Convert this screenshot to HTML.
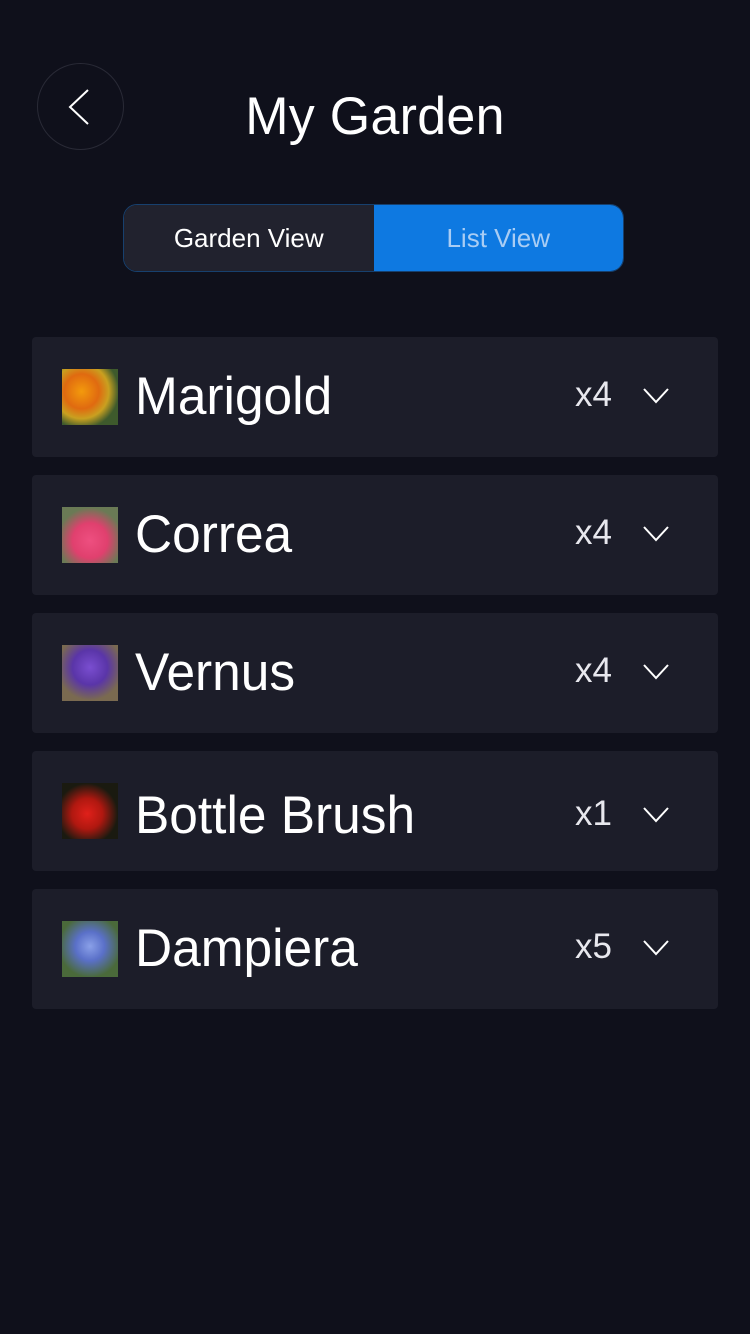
<!DOCTYPE html>
<html><head><style>
*{margin:0;padding:0;box-sizing:border-box}
body{width:750px;height:1334px;background:#0f101b;font-family:"Liberation Sans",sans-serif;color:#fff;position:relative;overflow:hidden}
.back{position:absolute;left:37px;top:63px;width:87px;height:87px;border-radius:50%;border:1.5px solid #292a36}
.title{position:absolute;left:0;width:750px;top:86px;text-align:center;font-size:53px;letter-spacing:0.3px;transform:scaleX(0.98)}
.tog{position:absolute;left:123px;top:204px;width:501px;height:68px;border-radius:14px;border:1px solid #17406e;overflow:hidden;display:flex}
.tog div{flex:1;display:flex;align-items:center;justify-content:center;font-size:26px}
.l{background:#21222e;color:#fff}
.r{background:#0e79e1;color:#a9cdf4}
.card{position:absolute;left:32px;width:686px;height:120px;background:#1c1d29;border-radius:4px}
.img{position:absolute;left:30px;top:32px;width:56px;height:56px}
.name{position:absolute;left:103px;top:28px;font-size:53px;line-height:64px;transform-origin:left;transform:scaleX(0.97)}
.cnt{position:absolute;left:543px;top:38px;font-size:35px;color:#e8e8ee}
.chev{position:absolute;left:610px;top:49px}
</style></head><body>
<div class="back"><svg width="87" height="87" style="position:absolute;left:-1px;top:-1px"><path d="M51 27 L33 44 L51 61" fill="none" stroke="#fff" stroke-width="2"/></svg></div>
<div class="title">My Garden</div>
<div class="tog"><div class="l">Garden View</div><div class="r">List View</div></div>

<div class="card" style="top:337px"><div class="img" style="background:radial-gradient(circle at 35% 40%,#f39a0c 0,#e06a10 35%,#c9a020 55%,#3e5a2c 75%)"></div><div class="name">Marigold</div><div class="cnt">x4</div><svg class="chev" width="30" height="20"><path d="M2 3 L14 16 L26 3" fill="none" stroke="#fff" stroke-width="2"/></svg></div>
<div class="card" style="top:475px"><div class="img" style="background:radial-gradient(circle at 50% 60%,#ee4f80 0,#e0406e 40%,#6a7a55 75%)"></div><div class="name">Correa</div><div class="cnt">x4</div><svg class="chev" width="30" height="20"><path d="M2 3 L14 16 L26 3" fill="none" stroke="#fff" stroke-width="2"/></svg></div>
<div class="card" style="top:613px"><div class="img" style="background:radial-gradient(circle at 50% 40%,#7a4ed0 0,#5a35a8 40%,#7a6a50 75%)"></div><div class="name">Vernus</div><div class="cnt">x4</div><svg class="chev" width="30" height="20"><path d="M2 3 L14 16 L26 3" fill="none" stroke="#fff" stroke-width="2"/></svg></div>
<div class="card" style="top:751px"><div class="img" style="background:radial-gradient(ellipse at 45% 55%,#e0201a 0,#b01810 35%,#1a1a10 70%)"></div><div class="name" style="top:33px">Bottle Brush</div><div class="cnt" style="top:43px">x1</div><svg class="chev" style="top:54px" width="30" height="20"><path d="M2 3 L14 16 L26 3" fill="none" stroke="#fff" stroke-width="2"/></svg></div>
<div class="card" style="top:889px"><div class="img" style="background:radial-gradient(circle at 50% 45%,#8aa0e8 0,#5a70c8 35%,#4a6a3a 75%)"></div><div class="name">Dampiera</div><div class="cnt">x5</div><svg class="chev" width="30" height="20"><path d="M2 3 L14 16 L26 3" fill="none" stroke="#fff" stroke-width="2"/></svg></div>
</body></html>
